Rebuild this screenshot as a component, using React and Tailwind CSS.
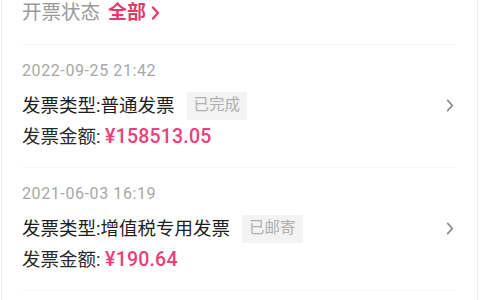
import React from "react";

const FONT = { fontFamily: "Roboto, 'Noto Sans CJK SC', sans-serif" };

const invoices = [
  {
    date: "2022-09-25 21:42",
    type: "普通发票",
    status: "已完成",
    amount: "¥158513.05",
  },
  {
    date: "2021-06-03 16:19",
    type: "增值税专用发票",
    status: "已邮寄",
    amount: "¥190.64",
  },
];

const Chevron = ({ className, width = 1.8 }) => (
  <svg viewBox="0 0 8 14" className={className} fill="none">
    <path
      d="M1.5 1.5 L6.5 7 L1.5 12.5"
      stroke="currentColor"
      strokeWidth={width}
      strokeLinecap="round"
      strokeLinejoin="round"
    />
  </svg>
);

const InvoiceItem = ({ item }) => (
  <div className="flex items-center border-b border-[#f6f6f6] pt-[16px] pb-[17px]">
    <div className="flex-1">
      <div className="text-[16px] leading-[20px] tracking-[0.6px] text-[#a8a8a8]">
        {item.date}
      </div>
      <div className="mt-[10px] flex h-[30px] items-center">
        <span className="text-[18.5px] leading-[26px] text-[#1e1e1e]">
          发票类型:{item.type}
        </span>
        <span className="ml-[12px] flex h-[28px] items-center bg-[#f3f3f3] px-[7px] text-[15.5px] text-[#b0b0b0]">
          {item.status}
        </span>
      </div>
      <div className="mt-[3px] text-[18.5px] leading-[26px] text-[#2a2a2a]">
        发票金额:{" "}
        <span className="text-[19.5px] font-medium tracking-[0.2px] text-[#e8417a]">
          {item.amount}
        </span>
      </div>
    </div>
    <Chevron className="mr-[3px] h-[13px] w-[8px] text-[#8a8a8a]" />
  </div>
);

export default function App() {
  return (
    <div
      className="ml-[1px] h-[300px] w-[477px] overflow-hidden border-x border-[#efefef] bg-white"
      style={FONT}
    >
      <div className="mx-[20px]">
        <div className="flex h-[45px] items-start border-b border-[#f6f6f6]">
          <div className="flex h-[26px] items-center">
            <span className="text-[19.5px] text-[#9a9a9a]">开票状态</span>
            <span className="ml-[8px] text-[19px] font-semibold text-[#e33a6c]">
              全部
            </span>
            <Chevron
              className="ml-[5px] h-[14px] w-[9px] text-[#e33a6c]"
              width={2.4}
            />
          </div>
        </div>
        {invoices.map((item) => (
          <InvoiceItem key={item.date} item={item} />
        ))}
      </div>
    </div>
  );
}
